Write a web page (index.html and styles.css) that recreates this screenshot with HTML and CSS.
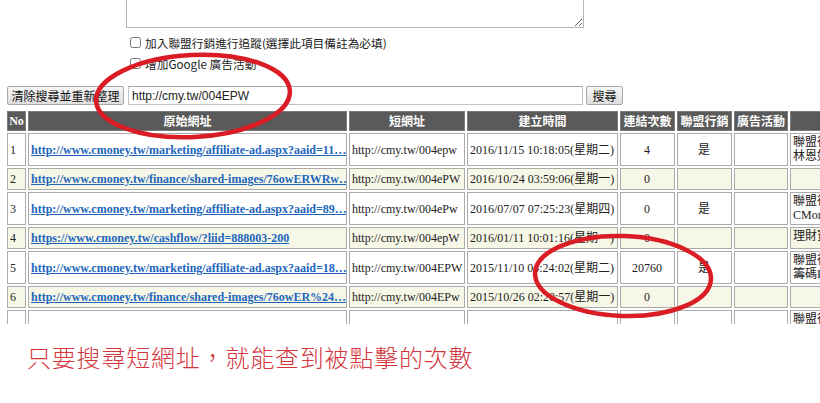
FILE: index.html
```html
<!DOCTYPE html>
<html lang="zh-Hant">
<head>
<meta charset="utf-8">
<title>短網址查詢</title>
<link rel="stylesheet" href="styles.css">
</head>
<body>
<div class="page">
  <div class="form">
    <textarea class="memo"></textarea>
    <label class="check"><input type="checkbox" class="box"><span>加入聯盟行銷進行追蹤(選擇此項目備註為必填)</span></label>
    <label class="check"><input type="checkbox" class="box"><span>增加Google 廣告活動</span></label>
  </div>
  <div class="search">
    <button class="btn btn-reset">清除搜尋並重新整理</button>
    <input class="query" type="text" value="http://cmy.tw/004EPW">
    <button class="btn btn-go">搜尋</button>
  </div>
  <div class="table-clip">
    <table class="grid">
      <colgroup>
        <col class="w-no"><col class="w-url"><col class="w-short"><col class="w-time"><col class="w-count"><col class="w-aff"><col class="w-ad"><col class="w-memo">
      </colgroup>
      <thead>
        <tr class="head">
          <th class="h-no">No</th><th>原始網址</th><th>短網址</th><th>建立時間</th><th>連結次數</th><th>聯盟行銷</th><th>廣告活動</th><th>備註</th>
        </tr>
      </thead>
      <tbody>
        <tr class="tall">
          <td>1</td><td class="url"><a href="#">http://www.cmoney.tw/marketing/affiliate-ad.aspx?aaid=11…</a></td><td class="short">http://cmy.tw/004epw</td><td>2016/11/15 10:18:05(星期二)</td><td class="mid">4</td><td class="mid">是</td><td></td><td class="memo-cell">聯盟行銷<br>林恩如老師</td>
        </tr>
        <tr class="alt">
          <td>2</td><td class="url"><a href="#">http://www.cmoney.tw/finance/shared-images/76owERWRw…</a></td><td class="short">http://cmy.tw/004ePW</td><td>2016/10/24 03:59:06(星期一)</td><td class="mid">0</td><td></td><td></td><td class="memo-cell"></td>
        </tr>
        <tr class="tall">
          <td>3</td><td class="url"><a href="#">http://www.cmoney.tw/marketing/affiliate-ad.aspx?aaid=89…</a></td><td class="short">http://cmy.tw/004ePw</td><td>2016/07/07 07:25:23(星期四)</td><td class="mid">0</td><td class="mid">是</td><td></td><td class="memo-cell">聯盟行銷<br>CMoney</td>
        </tr>
        <tr class="alt">
          <td>4</td><td class="url"><a href="#">https://www.cmoney.tw/cashflow/?liid=888003-200</a></td><td class="short">http://cmy.tw/004epW</td><td>2016/01/11 10:01:16(星期一)</td><td class="mid">0</td><td></td><td></td><td class="memo-cell">理財寶</td>
        </tr>
        <tr class="tall">
          <td>5</td><td class="url"><a href="#">http://www.cmoney.tw/marketing/affiliate-ad.aspx?aaid=18…</a></td><td class="short">http://cmy.tw/004EPW</td><td>2015/11/10 04:24:02(星期二)</td><td class="mid">20760</td><td class="mid">是</td><td></td><td class="memo-cell">聯盟行銷<br>籌碼K線</td>
        </tr>
        <tr class="alt">
          <td>6</td><td class="url"><a href="#">http://www.cmoney.tw/finance/shared-images/76owER%24…</a></td><td class="short">http://cmy.tw/004EPw</td><td>2015/10/26 02:20:57(星期一)</td><td class="mid">0</td><td></td><td></td><td class="memo-cell"></td>
        </tr>
        <tr class="tail">
          <td>7</td><td class="url"><a href="#">http://www.cmoney.tw/marketing/affiliate-ad.aspx?aaid=20…</a></td><td class="short">http://cmy.tw/004Epw</td><td>2015/09/30 11:12:40(星期三)</td><td class="mid">0</td><td class="mid">是</td><td></td><td class="memo-cell">聯盟行銷<br>籌碼K線<br>老師</td>
        </tr>
      </tbody>
    </table>
  </div>
  <p class="note">只要搜尋短網址，就能查到被點擊的次數</p>
</div>
<svg class="marks" width="820" height="403" viewBox="0 0 820 403" aria-hidden="true">
  <ellipse cx="193" cy="96" rx="97" ry="41" transform="rotate(-3 193 96)" class="ring"/>
  <ellipse cx="623" cy="276" rx="88" ry="40" transform="rotate(2 623 276)" class="ring"/>
</svg>
</body>
</html>
```
FILE: styles.css
```css
html, body {
  margin: 0;
  padding: 0;
  background: #ffffff;
}
body {
  width: 820px;
  height: 403px;
  overflow: hidden;
  position: relative;
  font-family: "Liberation Serif", "Noto Sans CJK TC", serif;
  color: #222;
}
.page {
  padding-left: 7px;
}
.form {
  margin-left: 119px;
}
.memo {
  display: block;
  box-sizing: border-box;
  width: 458px;
  height: 28px;
  margin: 0;
  padding: 0;
  border: 1px solid #b5b5b5;
  border-top: none;
  background: #fff;
}
.check {
  display: flex;
  align-items: center;
  height: 21px;
  padding-left: 4px;
  font-family: "Noto Sans CJK TC", "Liberation Sans", sans-serif;
  font-size: 11.7px;
  color: #222;
}
.check:first-of-type {
  margin-top: 4px;
}
.box {
  width: 11px;
  height: 11px;
  margin: 0 4px 0 0;
}
.search {
  display: flex;
  align-items: center;
  margin-top: 12px;
  height: 19px;
}
.btn {
  box-sizing: border-box;
  height: 19px;
  padding: 0;
  border: 1px solid #a9a9a9;
  border-radius: 2px;
  background: linear-gradient(#f6f6f6, #dedede);
  font-family: "Noto Sans CJK TC", "Liberation Sans", sans-serif;
  font-size: 12px;
  line-height: 17px;
  color: #111;
}
.btn-reset {
  width: 117px;
  margin-right: 4px;
}
.btn-go {
  width: 37px;
}
.query {
  box-sizing: border-box;
  width: 455px;
  height: 19px;
  margin: 0 3px 0 0;
  padding: 0 3px;
  border: 1px solid #c2c2c2;
  border-top-color: #a8a8a8;
  font-family: "Liberation Sans", sans-serif;
  font-size: 12px;
  color: #222;
}
.table-clip {
  margin-top: 4px;
  margin-left: -2px;
  height: 215px;
  overflow: hidden;
}
.grid {
  border-collapse: separate;
  border-spacing: 2px;
  table-layout: fixed;
  width: 907px;
  font-size: 12px;
  line-height: 14px;
}
.w-no { width: 19px; }
.w-url { width: 319px; }
.w-short { width: 116px; }
.w-time { width: 151px; }
.w-count { width: 55px; }
.w-aff { width: 55px; }
.w-ad { width: 54px; }
.w-memo { width: 120px; }
.grid th {
  height: 18px;
  padding: 0;
  background: #5a5a5a;
  border: 1px solid #7a7a7a;
  color: #fff;
  font-family: "Noto Sans CJK TC", "Liberation Sans", sans-serif;
  font-weight: bold;
  font-size: 12px;
  white-space: nowrap;
  overflow: hidden;
  text-align: center;
}
.grid th.h-no {
  font-family: "Liberation Serif", serif;
}
.grid td {
  padding: 1px 3px 1px 2px;
  border: 1px solid #ababab;
  white-space: nowrap;
  overflow: hidden;
  vertical-align: middle;
  color: #222;
}
.tall { height: 33px; }
.alt { height: 22px; }
.alt td { background: #f7f7e8; }
.tail { height: 46px; }
.url a {
  color: #2266bb;
  font-weight: bold;
  text-decoration: underline;
}
.short {
  color: #333;
}
.mid {
  text-align: center;
}
.memo-cell {
  vertical-align: top !important;
}
.note {
  margin: 17px 0 0 20px;
  font-family: "Noto Sans CJK TC", sans-serif;
  font-weight: 300;
  font-size: 24px;
  line-height: 32px;
  letter-spacing: 0.8px;
  color: #d3363e;
}
.marks {
  position: absolute;
  left: 0;
  top: 0;
  pointer-events: none;
}
.ring {
  fill: none;
  stroke: #da1c24;
  stroke-width: 4.5;
}
```
